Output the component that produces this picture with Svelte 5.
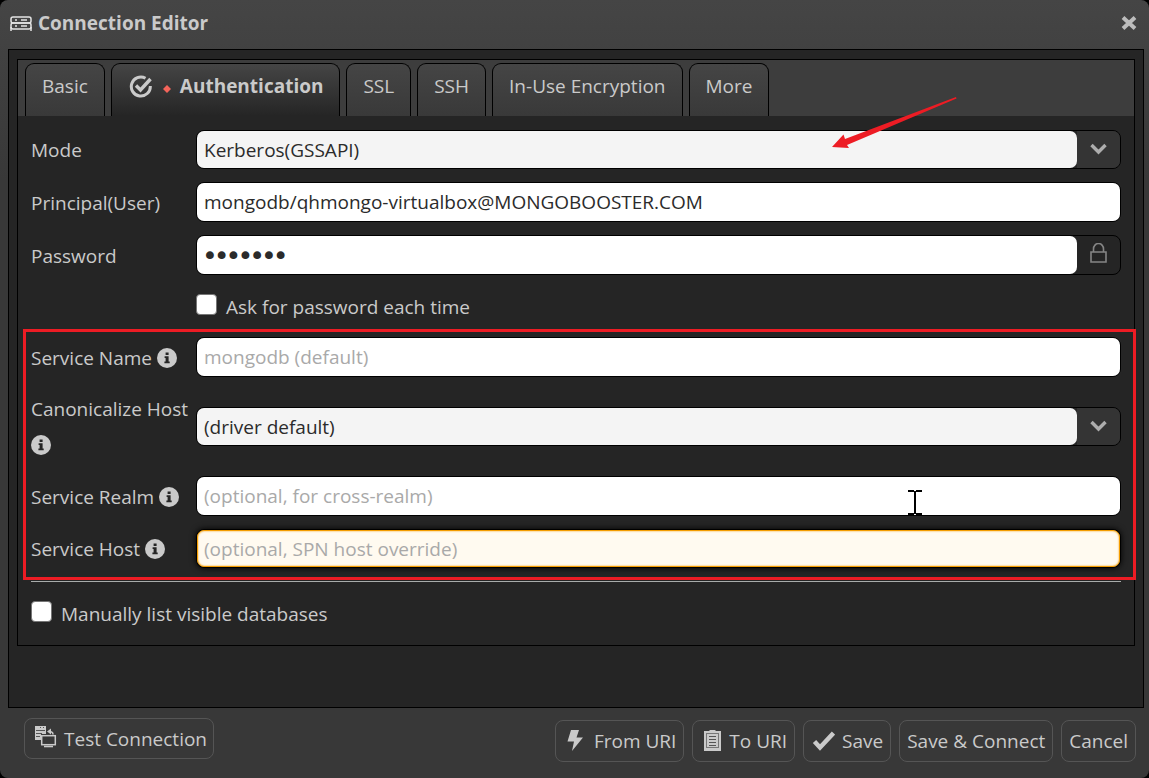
<script lang="ts">
	interface Tab {
		id: string;
		label: string;
	}

	const tabs: Tab[] = [
		{ id: 'basic', label: 'Basic' },
		{ id: 'auth', label: 'Authentication' },
		{ id: 'ssl', label: 'SSL' },
		{ id: 'ssh', label: 'SSH' },
		{ id: 'encryption', label: 'In-Use Encryption' },
		{ id: 'more', label: 'More' }
	];

	let activeTab = $state('auth');
	let mode = $state('Kerberos(GSSAPI)');
	let principal = $state('mongodb/qhmongo-virtualbox@MONGOBOOSTER.COM');
	let password = $state('mongodb');
	let askPassword = $state(false);
	let serviceName = $state('');
	let canonicalize = $state('(driver default)');
	let serviceRealm = $state('');
	let serviceHost = $state('');
	let listDatabases = $state(false);
</script>

{#snippet info()}
	<svg class="info" viewBox="0 0 20 20" aria-hidden="true">
		<circle cx="10" cy="10" r="10" fill="#cacaca" />
		<path d="M8.6 4.4h3v2.5h-3zM7.6 8.2h4v5.2h1.1v1.9H7.4v-1.9h1.2v-3.3h-1z" fill="#252525" />
	</svg>
{/snippet}

{#snippet chevron()}
	<span class="addon addon--dark">
		<svg width="18" height="12" viewBox="0 0 18 12" aria-hidden="true">
			<path d="M1.5 2l7 7 7-7" fill="none" stroke="#adadad" stroke-width="3.4" />
		</svg>
	</span>
{/snippet}

<div class="dialog">
	<header class="titlebar">
		<svg class="titlebar__icon" width="22" height="16" viewBox="0 0 22 16" aria-hidden="true">
			<g fill="none" stroke="#e4e4e4" stroke-width="1.5">
				<rect x="1" y="2" width="20" height="6" rx="2" />
				<rect x="1" y="8" width="20" height="6" rx="2" />
				<path d="M5 5h2M11 5h6M5 11h2M11 11h6M1 12v4M21 12v4" />
			</g>
		</svg>
		<h1>Connection Editor</h1>
		<button class="titlebar__close" aria-label="Close">
			<svg width="16" height="14" viewBox="0 0 16 14" aria-hidden="true">
				<path d="M2 1.5l12 11M14 1.5L2 12.5" stroke="#bdbdbd" stroke-width="4" />
			</svg>
		</button>
	</header>

	<main class="body">
		<div class="panel">
			<div class="tabs" role="tablist">
				{#each tabs as tab (tab.id)}
					<button
						class="tab"
						class:active={activeTab === tab.id}
						role="tab"
						aria-selected={activeTab === tab.id}
						onclick={() => (activeTab = tab.id)}
					>
						{#if tab.id === 'auth'}
							<svg class="tab__check" width="24" height="24" viewBox="0 0 24 24" aria-hidden="true">
								<path
									d="M16.5 3.3A9.5 9.5 0 1 0 21.3 11"
									fill="none"
									stroke="#cacaca"
									stroke-width="3"
								/>
								<path d="M7 10.5l4.5 4.5L21.5 4" fill="none" stroke="#cacaca" stroke-width="3.4" />
							</svg>
							<svg class="tab__dot" width="8" height="8" viewBox="0 0 8 8" aria-hidden="true">
								<path d="M4 0l4 4-4 4-4-4z" fill="#f4645a" />
							</svg>
						{/if}
						{tab.label}
					</button>
				{/each}
			</div>

			<form class="form" onsubmit={(e) => e.preventDefault()}>
				<div class="row">
					<label for="mode">Mode</label>
					<div class="control control--select">
						<select id="mode" bind:value={mode}>
							<option>Kerberos(GSSAPI)</option>
						</select>
						{@render chevron()}
						<svg class="arrow" width="125" height="52" viewBox="0 0 125 52" aria-hidden="true">
							<path d="M0 50L11.5 37.5 13 42 124 0l.5 1.5L15 48l2 3z" fill="#ed1c24" />
						</svg>
					</div>
				</div>

				<div class="row">
					<label for="principal">Principal(User)</label>
					<div class="control">
						<input id="principal" type="text" bind:value={principal} />
					</div>
				</div>

				<div class="row">
					<label for="password">Password</label>
					<div class="control">
						<input id="password" type="password" bind:value={password} />
						<button class="addon" type="button" aria-label="Show password">
							<svg width="18" height="22" viewBox="0 0 18 22" aria-hidden="true">
								<path
									d="M1 9h15v10H1zM3.5 9V6a5 5.5 0 0 1 10 0v3"
									fill="none"
									stroke="#858585"
									stroke-width="1.6"
								/>
							</svg>
						</button>
					</div>
				</div>

				<label class="check check--indent">
					<input type="checkbox" bind:checked={askPassword} />
					Ask for password each time
				</label>

				<div class="service">
					<div class="row">
						<label for="service-name">Service Name {@render info()}</label>
						<div class="control">
							<input
								id="service-name"
								type="text"
								placeholder="mongodb (default)"
								bind:value={serviceName}
							/>
						</div>
					</div>

					<div class="row">
						<label for="canonicalize">Canonicalize Host {@render info()}</label>
						<div class="control control--select">
							<select id="canonicalize" bind:value={canonicalize}>
								<option>(driver default)</option>
							</select>
							{@render chevron()}
						</div>
					</div>

					<div class="row">
						<label for="service-realm">Service Realm {@render info()}</label>
						<div class="control">
							<input
								id="service-realm"
								type="text"
								placeholder="(optional, for cross-realm)"
								bind:value={serviceRealm}
							/>
							<svg class="cursor" width="14" height="25" viewBox="0 0 14 25" aria-hidden="true">
								<path d="M0 1h6M8 1h6M7 1v23M0 24h6M8 24h6" stroke="#000" stroke-width="2" />
							</svg>
						</div>
					</div>

					<div class="row">
						<label for="service-host">Service Host {@render info()}</label>
						<div class="control control--focus">
							<input
								id="service-host"
								type="text"
								placeholder="(optional, SPN host override)"
								bind:value={serviceHost}
							/>
						</div>
					</div>
				</div>

				<hr />

				<label class="check">
					<input type="checkbox" bind:checked={listDatabases} />
					Manually list visible databases
				</label>
			</form>
		</div>
	</main>

	<footer class="footer">
		<button class="btn btn--test">
			<svg width="22" height="22" viewBox="0 0 22 22" aria-hidden="true">
				<path d="M0 0h11v8H6v6H0z" fill="#cacaca" />
				<path d="M1 4.5h9M1 7.5h6M1 10.5h4" stroke="#555" />
				<path d="M5 1.5h1M8 1.5h1" stroke="#555" />
				<rect x="6.7" y="9.7" width="13.6" height="9" fill="#383838" stroke="#cacaca" stroke-width="1.5" />
				<path d="M9 20.5h9" stroke="#cacaca" stroke-width="1.6" />
				<path d="M12 5.5l4-3v6z" fill="#cacaca" />
				<path d="M14 5.5c3 0 4 1 4 3" fill="none" stroke="#cacaca" stroke-width="1.5" />
			</svg>
			Test Connection
		</button>
		<div class="footer__actions">
			<button class="btn">
				<svg width="24" height="22" viewBox="0 0 24 22" aria-hidden="true">
					<path d="M8 0h8l-2.5 7.5H20L9 21l2-9.5H4.5z" fill="#cacaca" />
				</svg>
				From URI
			</button>
			<button class="btn">
				<svg width="22" height="22" viewBox="0 0 22 22" aria-hidden="true">
					<rect x="4" y="1" width="17" height="20" fill="#cacaca" />
					<rect x="9.5" y="0" width="6" height="4" fill="#cacaca" />
					<rect x="6.5" y="3.5" width="12" height="14" fill="none" stroke="#777" />
					<path d="M9 6.5h7M9 9.5h7M9 12.5h7M9 15.5h7" stroke="#555" />
				</svg>
				To URI
			</button>
			<button class="btn">
				<svg width="24" height="22" viewBox="0 0 24 22" aria-hidden="true">
					<path d="M3.5 11.5l5.5 6L22.5 3" fill="none" stroke="#cacaca" stroke-width="4.5" />
				</svg>
				Save
			</button>
			<button class="btn">Save &amp; Connect</button>
			<button class="btn">Cancel</button>
		</div>
	</footer>
</div>

<style>
	:global(body) {
		margin: 0;
		background: #000;
	}

	.dialog,
	.dialog :global(*) {
		box-sizing: border-box;
	}

	.dialog {
		display: flex;
		flex-direction: column;
		min-height: 100vh;
		border-radius: 8px;
		background: linear-gradient(#454545, #383838 180px);
		color: #cacaca;
		font-family: 'Segoe UI', 'Open Sans', sans-serif;
		font-size: 19px;
	}

	button,
	input,
	select {
		font: inherit;
		color: inherit;
		margin: 0;
	}

	/* Title bar */
	.titlebar {
		display: flex;
		align-items: center;
		height: 49px;
		padding: 0 12px 3px 10px;
	}

	.titlebar__icon {
		margin-right: 6px;
	}

	h1 {
		flex: 1;
		margin: 0;
		font-size: 19px;
		font-weight: 700;
	}

	.titlebar__close {
		display: flex;
		padding: 0;
		border: 0;
		background: none;
	}

	/* Body */
	.body {
		flex: 1;
		margin: 0 5px 0 8px;
		padding: 9px 8px;
		border: 1px solid #000;
		background: #252525;
	}

	.panel {
		border: 1px solid #000;
	}

	.tabs {
		display: flex;
		gap: 6px;
		padding: 3px 7px 0;
		background: #3d3d3d;
	}

	.tab {
		display: flex;
		align-items: center;
		height: 53px;
		padding: 0 16px 8px;
		border: 1px solid #000;
		border-bottom: 0;
		border-radius: 9px 9px 0 0;
		background: linear-gradient(#454545, #393939);
	}

	.tab.active {
		background: linear-gradient(#454545, #252525);
		font-weight: 700;
	}

	.tab__check {
		margin: 2px 10px 0 1px;
	}

	.tab__dot {
		margin: 6px 9px 0 0;
	}

	/* Form */
	.form,
	.service {
		display: flex;
		flex-direction: column;
		gap: 13px;
	}

	.form {
		padding: 14px 13px;
	}

	.service {
		position: relative;
	}

	.service::after {
		content: '';
		position: absolute;
		inset: -8px -15px -12px -8px;
		border: 3px solid #ed1c24;
		pointer-events: none;
	}

	.row {
		display: grid;
		grid-template-columns: 165px 1fr;
		align-items: center;
	}

	.row label {
		padding-top: 1px;
		line-height: 36px;
	}

	.info {
		width: 20px;
		height: 20px;
		vertical-align: -3px;
	}

	.control {
		position: relative;
		display: flex;
		height: 40px;
		border: 1px solid #000;
		border-radius: 8px;
		background: #252525;
	}

	.control--select {
		height: 39px;
	}

	.control input,
	.control select {
		flex: 1;
		min-width: 0;
		padding: 0 7px;
		border: 0;
		border-radius: 7px;
		outline: 0;
		background: #fff;
		color: #2b2b2b;
		appearance: none;
	}

	.control select {
		background: #f4f4f4;
	}

	.control input[type='password'] {
		font-family: 'DejaVu Sans', sans-serif;
		font-size: 20px;
		-webkit-text-stroke: 2px #2b2b2b;
	}

	.control input::placeholder {
		color: #a9a9a9;
		opacity: 1;
	}

	.control--focus {
		height: 39px;
		box-shadow: 0 0 6px #000;
	}

	.control--focus input {
		border: 1px solid #f39c00;
		padding: 0 6px;
		background: #fffaf0;
		box-shadow: inset 0 0 2px #f39c00;
	}

	.addon {
		display: flex;
		align-items: center;
		justify-content: center;
		width: 43px;
		padding: 0 0 3px;
		border: 0;
		border-radius: 0 7px 7px 0;
		background: none;
	}

	.addon--dark {
		padding-bottom: 1px;
		background: #343434;
		pointer-events: none;
	}

	.arrow {
		position: absolute;
		top: -34px;
		right: 163px;
		pointer-events: none;
	}

	.cursor {
		position: absolute;
		top: 13px;
		right: 198px;
		pointer-events: none;
	}

	.check {
		display: flex;
		align-items: center;
		gap: 9px;
		height: 36px;
		padding-top: 2px;
	}

	.check--indent {
		margin-left: 165px;
	}

	.check input {
		width: 21px;
		height: 21px;
		margin-bottom: 6px;
		border: 1px solid #767676;
		border-radius: 4px;
		background: #fff;
		appearance: none;
	}

	.check input:checked {
		background: #f59e0b;
	}

	hr {
		width: 100%;
		height: 1px;
		margin: 0;
		border: 0;
		background: #a9acab;
	}

	/* Footer */
	.footer {
		display: flex;
		align-items: flex-start;
		justify-content: space-between;
		padding: 10px 13px 16px 24px;
	}

	.footer__actions {
		display: flex;
		gap: 8px;
		padding-top: 2px;
	}

	.btn {
		display: flex;
		align-items: center;
		height: 42px;
		padding: 0 7px;
		border: 1px solid #555;
		border-radius: 8px;
		background: #383838;
		white-space: nowrap;
	}

	.btn svg {
		margin-right: 7px;
	}

	.btn--test {
		height: 41px;
		padding: 0 6px 0 10px;
	}

	.btn--test svg {
		margin-bottom: 4px;
	}
</style>
